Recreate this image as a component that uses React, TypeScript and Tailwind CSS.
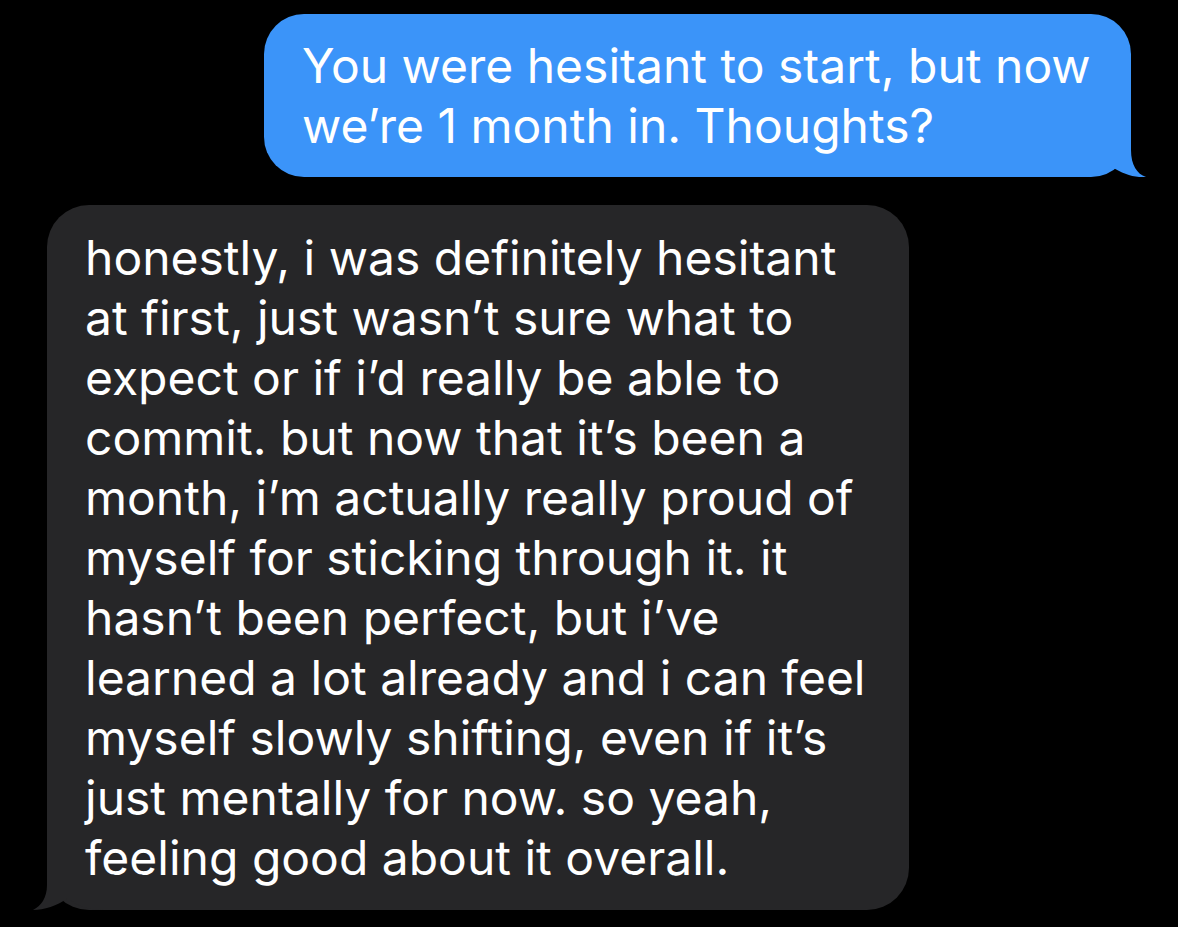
export default function App() {
  const reply = [
    "honestly, i was definitely hesitant",
    "at first, just wasn\u2019t sure what to",
    "expect or if i\u2019d really be able to",
    "commit. but now that it\u2019s been a",
    "month, i\u2019m actually really proud of",
    "myself for sticking through it. it",
    "hasn\u2019t been perfect, but i\u2019ve",
    "learned a lot already and i can feel",
    "myself slowly shifting, even if it\u2019s",
    "just mentally for now. so yeah,",
    "feeling good about it overall.",
  ];

  return (
    <div
      className="w-[1178px] h-[927px] bg-black flex flex-col overflow-hidden text-white"
      style={{ fontFamily: "Inter, 'Noto Sans', sans-serif" }}
    >
      {/* sent bubble */}
      <div className="relative ml-[264px] mt-[14px] w-[867px] h-[163px] bg-[#3b94f9] rounded-[40px] pl-[38px] pt-[22px]">
        <svg
          className="absolute right-[-19px] bottom-0"
          width="75"
          height="47"
          viewBox="0 0 75 47"
        >
          <path
            d="M0,47 L0,0 L56,0 L56,20 C56,35 62,44 71,47 C60,48 48,44 37,37 C28,44 18,47 0,47 Z"
            fill="#3b94f9"
          />
        </svg>
        <div className="relative text-[48px] leading-[60px]">
          <div>You were hesitant to start, but now</div>
          <div>we{"\u2019"}re 1 month in. Thoughts?</div>
        </div>
      </div>

      {/* received bubble */}
      <div className="relative ml-[47px] mt-[28px] w-[862px] h-[705px] bg-[#262628] rounded-[42px] pl-[38px] pt-[23px]">
        <svg
          className="absolute left-[-17px] bottom-0"
          width="75"
          height="50"
          viewBox="0 0 75 50"
        >
          <path
            d="M75,50 L75,0 L17,0 L17,25 C17,38 11,46 3,50 C14,50 27,46 38,38 C47,46 57,50 75,50 Z"
            fill="#262628"
          />
        </svg>
        <div className="relative text-[48px] leading-[60px]">
          {reply.map((line) => (
            <div key={line}>{line}</div>
          ))}
        </div>
      </div>
    </div>
  );
}
